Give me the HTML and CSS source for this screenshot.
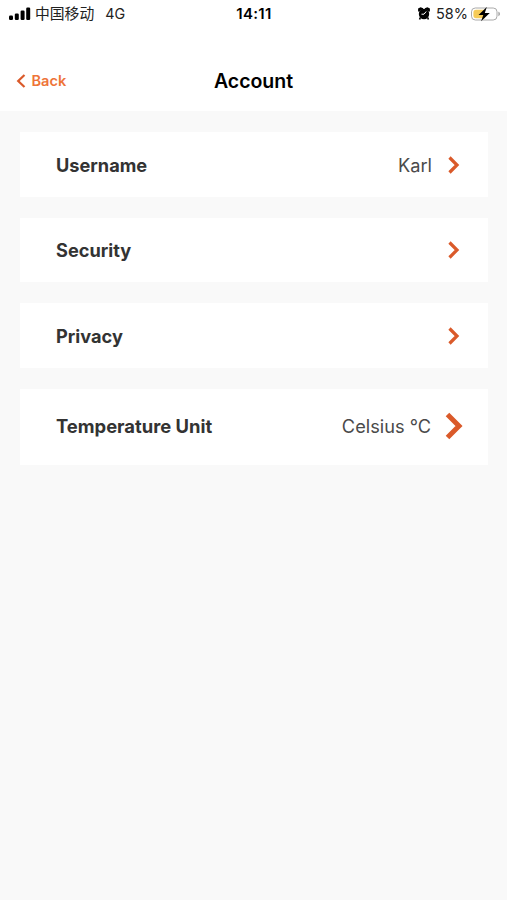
FILE: index.html
```html
<!DOCTYPE html>
<html lang="en">
<head>
<meta charset="utf-8">
<title>Account</title>
<link rel="stylesheet" href="styles.css">
</head>
<body>
<header class="top">
  <div class="status">
    <div class="status-left">
      <svg class="signal" width="22" height="14" viewBox="0 0 22 14"><rect x="0" y="8.500" width="4" height="4.500" rx="1.200"/><rect x="5.800" y="6.500" width="4" height="6.500" rx="1.200"/><rect x="11.600" y="3.500" width="4" height="9.500" rx="1.200"/><rect x="17.200" y="0.500" width="4" height="12.500" rx="1.200"/></svg>
      <span class="carrier">中国移动</span>
      <span class="network">4G</span>
    </div>
    <span class="time">14:11</span>
    <div class="status-right">
      <svg class="alarm" width="12" height="14" viewBox="0 0 12 14"><circle cx="6" cy="7" r="5.200"/><path d="M.9 4.500V2l1.700-.8 2.400.8M11.100 4.500V2l-1.700-.8L7 2M2.300 10.500l-.7 2M9.700 10.500l.7 2" stroke="#000" stroke-width="1.600"/><path d="M8.200 4.500 6 7.200H3.500" fill="none" stroke="#fff"/></svg>
      <span class="percent">58%</span>
      <svg class="battery" width="30" height="16" viewBox="0 0 30 16"><rect x=".5" y="2" width="25.500" height="12" rx="3.800" fill="#fff" stroke="#aaa"/><path d="M5 3.800h9v8.400H5A2.600 2.600 0 0 1 2.400 9.600V6.400A2.600 2.600 0 0 1 5 3.800z" fill="#f6cb58"/><path d="M27.300 5.800c2.300.6 2.300 3.800 0 4.400z" fill="#aaa"/><path d="M15.800 1 7.500 9h4.800l-2.200 6.200L18.800 7h-5z"/></svg>
    </div>
  </div>
  <nav class="nav">
    <a class="back"><svg width="10" height="14" viewBox="0 0 10 14"><path d="M8.500 1 2.200 7l6.300 6"/></svg>Back</a>
    <h1 class="title">Account</h1>
  </nav>
</header>
<main class="list">
  <div class="row"><span class="label">Username</span><span class="value">Karl</span><svg class="chevron" width="12" height="18" viewBox="0 0 12 18"><path d="M1.500 1.500 9 9l-7.500 7.500"/></svg></div>
  <div class="row"><span class="label">Security</span><svg class="chevron" width="12" height="18" viewBox="0 0 12 18"><path d="M1.500 1.500 9 9l-7.500 7.500"/></svg></div>
  <div class="row"><span class="label">Privacy</span><svg class="chevron" width="12" height="18" viewBox="0 0 12 18"><path d="M1.500 1.500 9 9l-7.500 7.500"/></svg></div>
  <div class="row row-large"><span class="label">Temperature Unit</span><span class="value">Celsius °C</span><svg class="chevron" width="18" height="28" viewBox="0 0 18 28"><path d="M2.500 2.500 14 14 2.500 25.500"/></svg></div>
</main>
</body>
</html>
```
FILE: styles.css
```css
* { box-sizing: border-box; }
body { margin: 0; min-height: 900px; background: #f9f9f9; color: #333; font-family: Inter, "Noto Sans CJK SC", sans-serif; }
svg { display: block; flex: none; }
.top { height: 111px; background: #fff; }
.status { display: grid; grid-template-columns: 1fr auto 1fr; align-items: center; height: 27px; padding: 0 6px 0 9px; color: #222; font-size: 14.5px; }
.status-left, .status-right { display: flex; align-items: center; }
.status-right { justify-content: flex-end; }
.carrier { margin-left: 4px; font-size: 14.8px; line-height: 20px; }
.network { margin-left: 11px; font-size: 14.3px; }
.time { margin-right: 2px; color: #000; font-size: 15px; font-weight: 600; letter-spacing: 0.3px; }
.percent { margin: 0 3px 0 6px; }
.nav { display: grid; grid-template-columns: 1fr auto 1fr; align-items: center; height: 84px; padding: 23px 16px 0; }
.back { display: flex; align-items: center; gap: 5.5px; color: #ee7438; font-size: 14.6px; font-weight: 600; }
.back path, .chevron path { fill: none; stroke: #da5a2a; stroke-width: 2.2; }
.title { margin: 0; color: #000; font-size: 19.5px; line-height: 24px; font-weight: 600; }
.list { display: flex; flex-direction: column; gap: 21px; padding: 21px 19px 0 20px; }
.row { display: flex; align-items: center; height: 64.5px; padding: 1px 28px 0 36px; background: #fff; font-size: 18.2px; }
.label { margin-right: auto; font-weight: 700; }
.value { margin-right: 16px; color: #4a4a4a; font-size: 18.2px; }
.chevron path { stroke-width: 3.2; }
.row-large { height: 76px; padding: 0 25px 1px 36px; }
.row-large .label { font-size: 18.4px; }
.row-large .value { margin-right: 14px; }
.row-large .chevron path { stroke-width: 5; }
```
